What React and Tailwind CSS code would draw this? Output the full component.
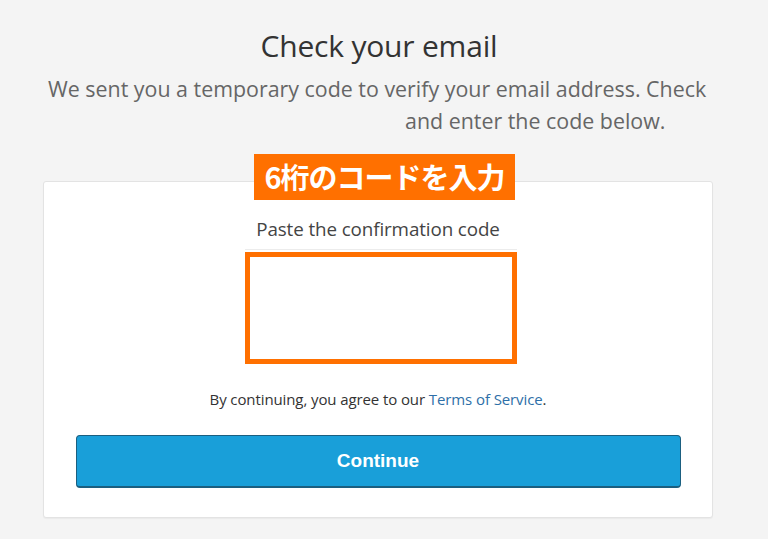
import React from "react";

const App = () => {
  return (
    <div
      className="w-[768px] h-[539px] bg-[#f4f4f4] overflow-hidden"
      style={{ fontFamily: '"Open Sans", "Noto Sans CJK JP", sans-serif' }}
    >
      <h1 className="pt-[27px] pr-[10px] text-center text-[30px] leading-[38px] text-[#333] tracking-[-0.2px]">
        Check your email
      </h1>
      <p className="mt-[8px] text-[21.4px] leading-[32px] text-[#666] whitespace-nowrap">
        <span className="block pl-[48px]">
          We sent you a temporary code to verify your email address. Check
        </span>
        <span className="block pl-[405px]">and enter the code below.</span>
      </p>

      <div className="relative mt-[44px] ml-[43px] w-[670px] h-[337px] bg-white border border-[#e3e3e3] rounded-[3px] shadow-[0_1px_1px_rgba(0,0,0,0.04)]">
        {/* annotation label */}
        <div
          className="absolute left-[210px] top-[-28px] w-[261px] h-[46px] bg-[#ff7000] flex items-center justify-center text-white font-bold text-[29px] tracking-[-1px]"
          style={{ fontFamily: '"Noto Sans CJK JP", sans-serif' }}
        >
          6桁のコードを入力
        </div>

        <div className="flex flex-col items-center pt-[34px]">
          <div className="text-[18.8px] leading-[26px] text-[#444] tracking-[-0.1px]">
            Paste the confirmation code
          </div>
          <div className="mt-[7px] ml-[6px] w-[272px] border-t border-[#ececec]">
            <div className="mt-[2px] w-[272px] h-[112px] border-[5px] border-[#ff7000]"></div>
          </div>
          <div className="mt-[25px] text-[15px] leading-[20px] text-[#333] tracking-[-0.1px]">
            By continuing, you agree to our{" "}
            <span className="text-[#2e6fa8]">Terms of Service</span>.
          </div>
          <button
            className="mt-[26px] w-[605px] h-[53px] bg-[#199fd9] border border-[#1b5f80] border-b-[2px] rounded-[4px] text-white text-[19px] font-bold"
            style={{ fontFamily: '"Liberation Sans", Arial, sans-serif' }}
          >
            Continue
          </button>
        </div>
      </div>
    </div>
  );
};

export default App;
